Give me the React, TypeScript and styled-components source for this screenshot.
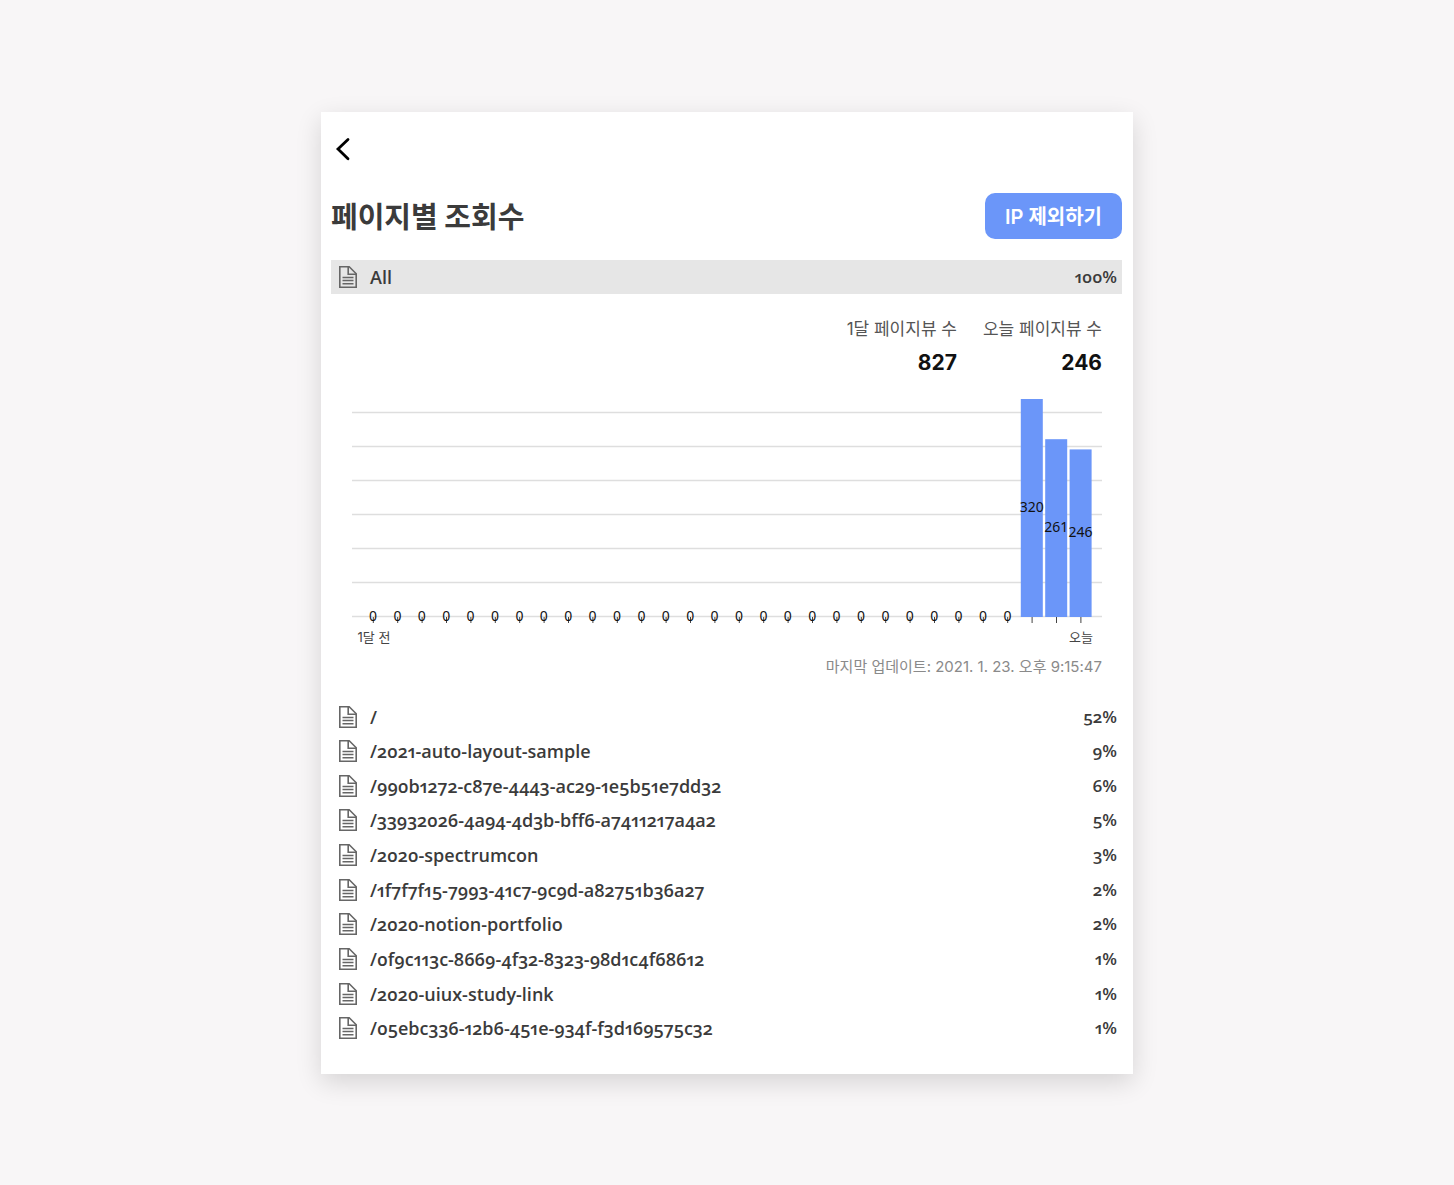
import React from "react";
import styled, { createGlobalStyle } from "styled-components";

const korean = `Inter, "Noto Sans CJK KR", sans-serif`;
const display = `"Open Sans", "Noto Sans CJK KR", sans-serif`;

const GlobalStyle = createGlobalStyle`
  *, *::before, *::after { box-sizing: border-box; }
  body {
    margin: 0;
    background: #f8f6f7;
    color: #3b3b3b;
    font-family: ${korean};
  }
`;

const Page = styled.div`
  min-height: 100vh;
  display: flex;
  align-items: center;
  justify-content: center;
  padding: 24px;
`;

const Card = styled.main`
  width: 100%;
  max-width: 812px;
  padding: 20px 11px 28px 10px;
  background: #fff;
  box-shadow: 0 8px 24px rgba(0, 0, 0, 0.14);
`;

const BackButton = styled.button`
  display: flex;
  align-items: center;
  width: 34px;
  height: 34px;
  padding: 0 0 0 4px;
  border: 0;
  background: none;
  color: #000;
  cursor: pointer;
`;

const Header = styled.header`
  display: flex;
  align-items: center;
  justify-content: space-between;
  padding: 27px 0 21px;
`;

const Title = styled.h1`
  margin: 0;
  padding-bottom: 2px;
  font: 700 29px/44px "Noto Sans CJK KR", sans-serif;
`;

const PrimaryButton = styled.button`
  height: 46px;
  padding: 3px 20px 0;
  border: 0;
  border-radius: 10px;
  background: #6b96f9;
  color: #fff;
  font: 600 20px/28px ${korean};
  cursor: pointer;
`;

const RowButton = styled.button<{ $selected?: boolean }>`
  display: flex;
  align-items: center;
  gap: 13px;
  width: 100%;
  height: 34px;
  padding: 0 5px 0 8px;
  border: 0;
  background: ${(p) => (p.$selected ? "#e6e6e6" : "transparent")};
  color: #3b3b3b;
  font: 600 17px/24px ${display};
  font-feature-settings: "onum" 1, "pnum" 1;
  text-align: left;
  cursor: pointer;
`;

const Path = styled.span`
  flex: 1;
  font-size: 18px;
`;

const Percent = styled.span``;

const PageList = styled.ul`
  display: grid;
  align-content: space-between;
  min-height: 346px;
  margin: 0;
  padding: 0;
  list-style: none;
`;

const Details = styled.section`
  padding: 22px 20px 21px 21px;
`;

const Stats = styled.dl`
  display: flex;
  justify-content: flex-end;
  gap: 26px;
  margin: 0;
  text-align: right;
`;

const StatLabel = styled.dt`
  color: #555;
  font-size: 17px;
  line-height: 26px;
`;

const StatValue = styled.dd`
  margin: 8px 0 0;
  color: #111;
  font-size: 21px;
  font-weight: 700;
  line-height: 26px;
`;

const Chart = styled.svg`
  display: block;
  width: 100%;
  height: auto;
  margin-top: 23px;
  overflow: visible;
`;

const BarLabel = styled.text`
  fill: #111;
  font: 400 14px "Noto Sans", sans-serif;
  text-anchor: middle;
`;

const AxisLabel = styled.text`
  fill: #444;
  font: 400 13px ${korean};
  text-anchor: middle;
`;

const Updated = styled.p`
  margin: 8px 0 0;
  color: #8a8a8a;
  font-size: 15px;
  line-height: 24px;
  text-align: right;
`;

const DocumentIcon = () => (
  <svg width="18" height="22" viewBox="0 0 18 22" fill="none" stroke="#666" strokeWidth="1.6" aria-hidden="true">
    <path d="M.8.8h9.4l7 7v13.4H.8z" />
    <path d="M9.2.8v7.4h8M3.5 11.5h11M3.5 14.5h11M3.5 17.7h11" />
  </svg>
);

const views = [...Array(27).fill(0), 320, 261, 246];
const pitch = 24.4;
const baseline = 218;
const unit = 0.68125;

const ViewsChart = () => (
  <Chart viewBox="0 0 750 248" role="img" aria-label="페이지뷰">
    {[0, 1, 2, 3, 4, 5, 6].map((n) => (
      <path key={n} d={`M0 ${baseline - n * 34 - 0.5}H750`} stroke="#dedede" strokeWidth="1.4" />
    ))}
    {views.map((v, i) => {
      const x = 21 + i * pitch;
      const h = v * unit;
      return (
        <g key={i}>
          <path d={`M${x + 0.3} ${baseline}v6`} stroke="#444" />
          <rect x={x - 11} y={baseline - h} width="22" height={h} fill="#6b96f9" />
          <BarLabel x={x} y={baseline - h / 2 + 4}>{v}</BarLabel>
        </g>
      );
    })}
    <AxisLabel x="22" y="243">1달 전</AxisLabel>
    <AxisLabel x="729" y="243">오늘</AxisLabel>
  </Chart>
);

const pages: [string, number][] = [
  ["/", 52],
  ["/2021-auto-layout-sample", 9],
  ["/990b1272-c87e-4443-ac29-1e5b51e7dd32", 6],
  ["/33932026-4a94-4d3b-bff6-a7411217a4a2", 5],
  ["/2020-spectrumcon", 3],
  ["/1f7f7f15-7993-41c7-9c9d-a82751b36a27", 2],
  ["/2020-notion-portfolio", 2],
  ["/0f9c113c-8669-4f32-8323-98d1c4f68612", 1],
  ["/2020-uiux-study-link", 1],
  ["/05ebc336-12b6-451e-934f-f3d169575c32", 1],
];

const PageRow = ({ path, percent, selected }: { path: string; percent: number; selected?: boolean }) => (
  <RowButton type="button" $selected={selected} aria-expanded={!!selected}>
    <DocumentIcon />
    <Path>{path}</Path>
    <Percent>{percent}%</Percent>
  </RowButton>
);

export default function App() {
  return (
    <Page>
      <GlobalStyle />
      <Card>
        <BackButton type="button" aria-label="뒤로">
          <svg width="16" height="24" viewBox="0 0 16 24" fill="none" stroke="currentColor" strokeWidth="2.8" strokeLinecap="round" aria-hidden="true">
            <path d="M13 2.5 3 12l10 9.8" />
          </svg>
        </BackButton>
        <Header>
          <Title>페이지별 조회수</Title>
          <PrimaryButton type="button">IP 제외하기</PrimaryButton>
        </Header>
        <PageRow path="All" percent={100} selected />
        <Details>
          <Stats>
            <div>
              <StatLabel>1달 페이지뷰 수</StatLabel>
              <StatValue>827</StatValue>
            </div>
            <div>
              <StatLabel>오늘 페이지뷰 수</StatLabel>
              <StatValue>246</StatValue>
            </div>
          </Stats>
          <ViewsChart />
          <Updated>마지막 업데이트: 2021. 1. 23. 오후 9:15:47</Updated>
        </Details>
        <PageList>
          {pages.map(([path, percent]) => (
            <li key={path}>
              <PageRow path={path} percent={percent} />
            </li>
          ))}
        </PageList>
      </Card>
    </Page>
  );
}
